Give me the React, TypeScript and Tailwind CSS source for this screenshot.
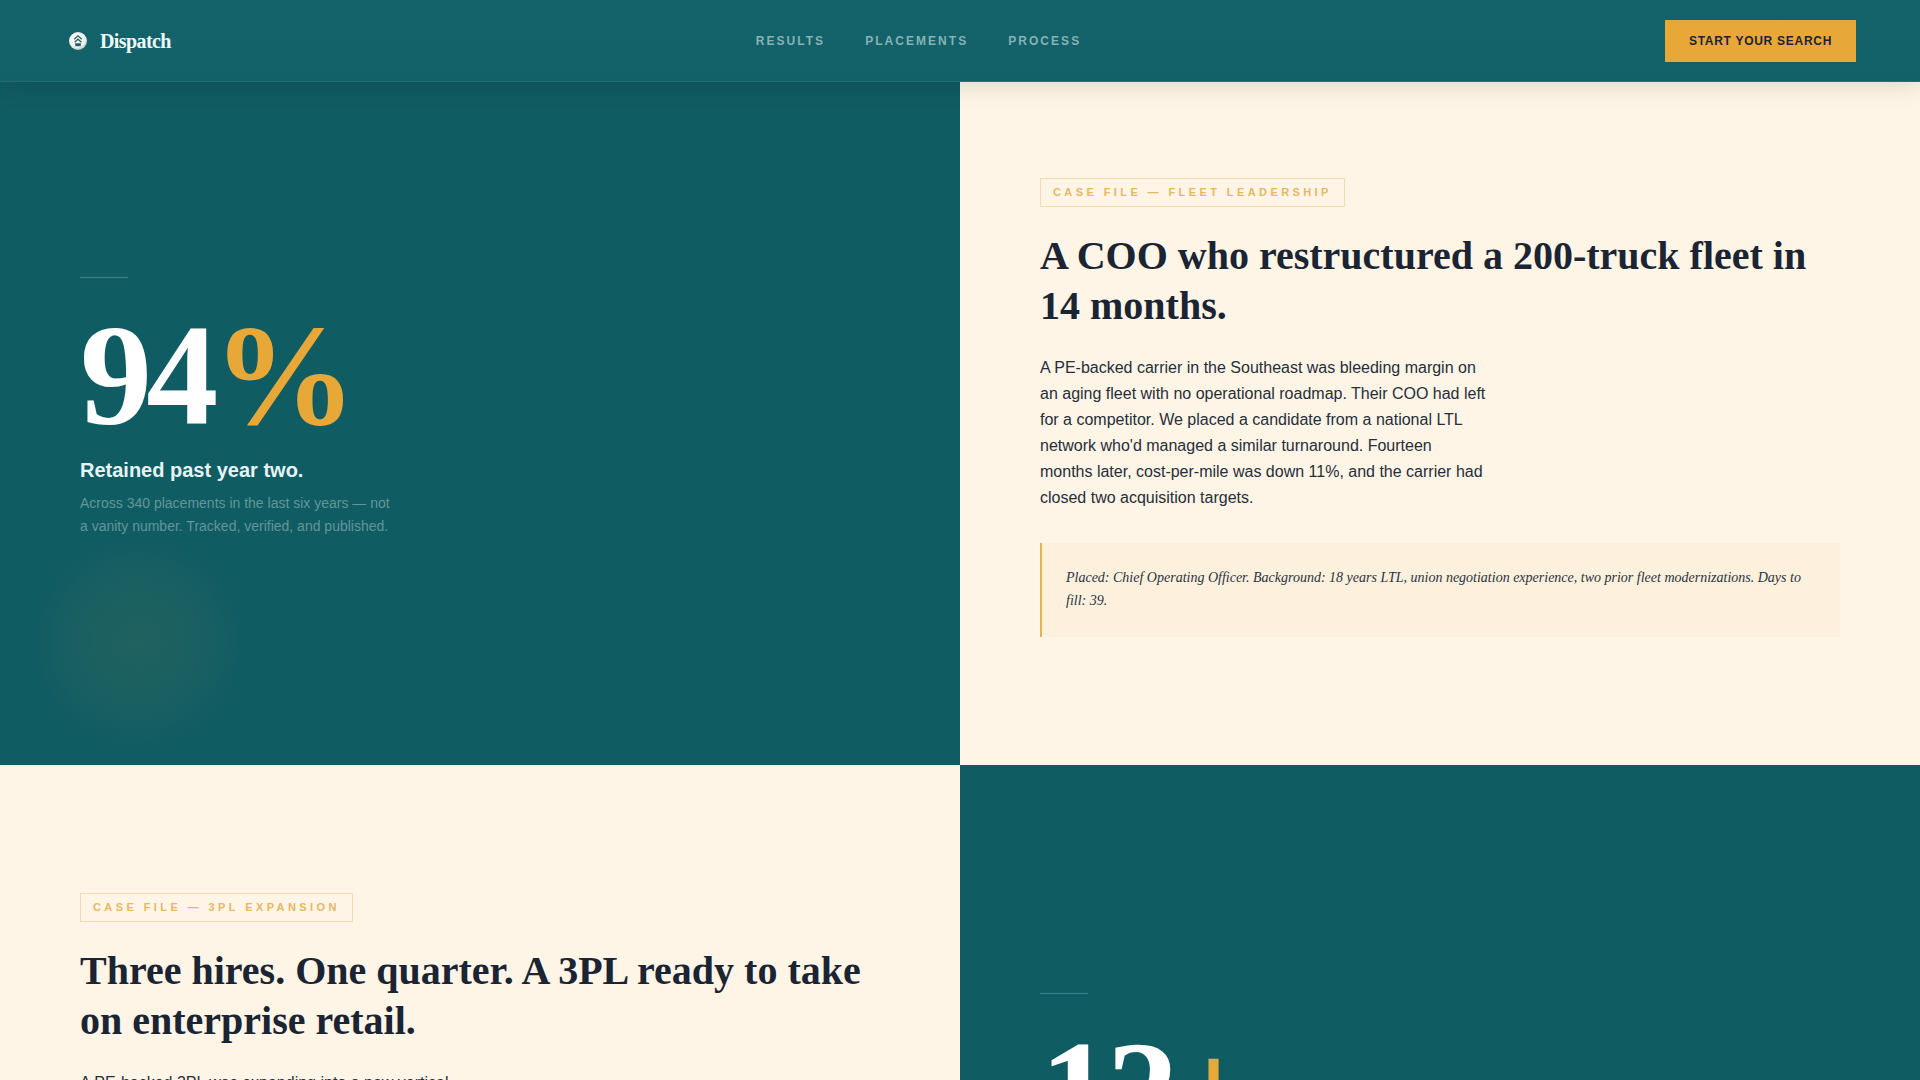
import React from "react";

const serif = "font-['Liberation_Serif',serif]";

function Logo() {
  return (
    <svg width="18" height="18" viewBox="0 0 18 18" aria-hidden="true">
      <defs>
        <radialGradient id="lg" cx="45%" cy="40%" r="65%">
          <stop offset="0%" stopColor="#ffffff" />
          <stop offset="70%" stopColor="#eef0ea" />
          <stop offset="100%" stopColor="#9fb2ae" />
        </radialGradient>
      </defs>
      <circle cx="9" cy="9" r="9" fill="url(#lg)" />
      <path d="M5.2 7.2 L9 3.8 L12.8 7.2" fill="none" stroke="#2a5f67" strokeWidth="1.3" />
      <path d="M5.6 10.2 L9 7.2 L12.4 10.2" fill="none" stroke="#2a5f67" strokeWidth="1.3" />
      <path d="M6.2 11.2 H11.8 V14.2 H6.2 Z" fill="#2a5f67" />
    </svg>
  );
}

function Nav() {
  return (
    <nav className="relative z-10 h-[82px] flex items-center justify-between pl-[69px] pr-[64px] border-b border-[#24706f] bg-gradient-to-b from-[#14626a] to-[#126068] shadow-[0_4px_24px_rgba(0,0,0,0.12)]">
      <div className="flex items-center gap-[13px] w-[300px]">
        <Logo />
        <span className={`${serif} text-[20px] font-bold tracking-[-0.03em] text-[#eefafa]`}>Dispatch</span>
      </div>
      <div className="flex items-center gap-[40px] mr-[197px] font-['Liberation_Sans',sans-serif] text-[12px] font-bold tracking-[0.17em] text-[#85b3b6]">
        <span>RESULTS</span>
        <span>PLACEMENTS</span>
        <span>PROCESS</span>
      </div>
      <button className="h-[42px] w-[191px] bg-[#e8a838] font-['Liberation_Sans',sans-serif] text-[12px] font-bold tracking-[0.06em] text-[#1a2433]">
        START YOUR SEARCH
      </button>
    </nav>
  );
}

function Stat({ num, suffix, title, text, glow, pad }: { num: string; suffix: string; title: string; text: string; glow?: boolean; pad?: string }) {
  return (
    <div className={`relative overflow-hidden bg-[#105c63] px-[80px] flex flex-col justify-center ${pad ?? ""}`}>
      {glow && (
        <div className="absolute left-[28px] top-[450px] w-[220px] h-[220px] rounded-full bg-[radial-gradient(circle,rgba(232,168,56,0.08)_0%,rgba(232,168,56,0.045)_40%,rgba(232,168,56,0)_70%)]" />
      )}
      <div className="relative">
        <div className="w-[48px] h-px bg-[#e8a838] opacity-40 mb-[26px]" />
        <div className={`${serif} text-[144px] leading-[1] font-bold tracking-[-0.04em] text-white`}>
          {num}
          <span className="font-bold text-[#e8a838]">{suffix}</span>
        </div>
        <div className="mt-[8px] font-['Liberation_Sans',sans-serif] text-[20px] leading-[28px] font-semibold text-[#e6f4f4]">{title}</div>
        <p className="mt-[8px] max-w-[320px] font-['Liberation_Sans',sans-serif] text-[14px] leading-[23px] text-[#629699]">{text}</p>
      </div>
    </div>
  );
}

function Case({ tag, title, body, quote, pad }: { tag: string; title: string; body: string; quote: string; pad: string }) {
  return (
    <div className={`bg-[#fff5e6] px-[80px] pb-[128px] ${pad}`}>
      <span className="inline-block border border-[#f3dcb0] px-[12px] h-[29px] leading-[27px] font-['Liberation_Sans',sans-serif] text-[11px] font-bold tracking-[0.31em] text-[#e5b767]">
        {tag}
      </span>
      <h2 className={`${serif} mt-[24px] text-[40px] leading-[50px] font-bold text-[#1a2433]`}>{title}</h2>
      <p className="mt-[24px] max-w-[448px] font-['Liberation_Sans',sans-serif] text-[16px] leading-[26px] text-[#262e3a]">{body}</p>
      <div className={`${serif} mt-[32px] border-l-2 border-[#e3b34f] bg-[#fdf0dc] pl-[24px] pr-[24px] pt-[23px] pb-[25px] text-[14px] leading-[23px] italic text-[#2a3340]`}>
        {quote}
      </div>
    </div>
  );
}

export default function App() {
  return (
    <div className="h-screen overflow-hidden bg-[#fff5e6]">
      <Nav />
      <div className="grid grid-cols-2 h-[683px]">
        <Stat
          glow
          pad="pb-[32px]"
          num="94"
          suffix="%"
          title="Retained past year two."
          text="Across 340 placements in the last six years — not a vanity number. Tracked, verified, and published."
        />
        <Case
          pad="pt-[96px]"
          tag="CASE FILE — FLEET LEADERSHIP"
          title="A COO who restructured a 200-truck fleet in 14 months."
          body="A PE-backed carrier in the Southeast was bleeding margin on an aging fleet with no operational roadmap. Their COO had left for a competitor. We placed a candidate from a national LTL network who'd managed a similar turnaround. Fourteen months later, cost-per-mile was down 11%, and the carrier had closed two acquisition targets."
          quote="Placed: Chief Operating Officer. Background: 18 years LTL, union negotiation experience, two prior fleet modernizations. Days to fill: 39."
        />
      </div>
      <div className="grid grid-cols-2 h-[716px]">
        <Case
          pad="pt-[128px]"
          tag="CASE FILE — 3PL EXPANSION"
          title="Three hires. One quarter. A 3PL ready to take on enterprise retail."
          body={"A PE-backed 3PL was expanding into a new vertical and\u00a0needed\u00a0a leadership team that had already done it once. We placed three operators in a single quarter."}
          quote="Placed: VP Operations, Director of Sales, Head of Customer Success. Days to fill: 78."
        />
        <Stat
          num="12"
          suffix="+"
          title="Years average tenure."
          text="Candidates we place have a decade or more of freight experience behind them."
        />
      </div>
    </div>
  );
}
